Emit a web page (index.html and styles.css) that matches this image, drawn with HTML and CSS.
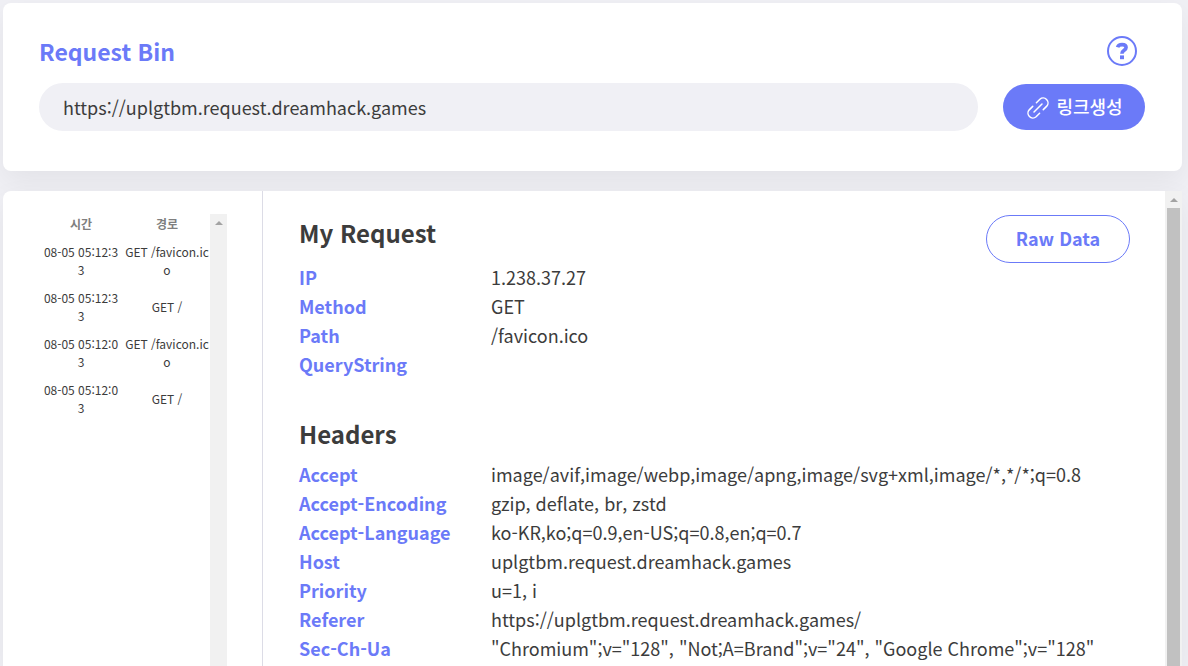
FILE: index.html
```html
<!DOCTYPE html>
<html lang="ko">
<head>
<meta charset="utf-8">
<title>Request Bin</title>
<link rel="stylesheet" href="styles.css">
</head>
<body>
<div class="page">
  <section class="card bin">
    <div class="bin-head">
      <h1 class="bin-title"><label for="bin-url">Request Bin</label></h1>
      <button class="help" type="button" aria-label="Help">
        <svg class="help-icon" viewBox="0 0 30 30" aria-hidden="true">
          <circle cx="15" cy="15" r="14" fill="none" stroke="currentColor" stroke-width="2"/>
          <path d="M10.600 11.200C11.200 9.200 13 8.600 15.100 8.600c2.600 0 4 1.100 4 2.900 0 2.900-4.200 2.700-4.200 6.200" fill="none" stroke="currentColor" stroke-width="3.600"/>
          <path d="M13 19.400h4v3.800h-4z" fill="currentColor"/>
        </svg>
      </button>
    </div>
    <div class="bin-row">
      <input class="url" id="bin-url" type="text" value="https://uplgtbm.request.dreamhack.games" readonly>
      <button class="create" type="button">
        <svg class="link-icon" viewBox="0 0 22 22" fill="none" stroke="currentColor" stroke-width="1.500" stroke-linecap="round" aria-hidden="true">
          <path d="M7 15l8-8"/>
          <path d="M9.400 5.800l3.500-3.500a4.850 4.850 0 0 1 6.850 6.850l-3.500 3.500"/>
          <path d="M12.600 16.200l-3.500 3.500a4.850 4.850 0 0 1-6.850-6.850l3.500-3.500"/>
        </svg>
        <span>링크생성</span>
      </button>
    </div>
  </section>

  <main class="card viewer">
    <aside class="history">
      <div class="history-scroll">
        <div class="log-wrap">
          <table class="log">
            <thead><tr><th>시간</th><th>경로</th></tr></thead>
            <tbody>
              <tr><td class="time">08-05 05:12:33</td><td>GET /favicon.ico</td></tr>
              <tr><td class="time">08-05 05:12:33</td><td>GET /</td></tr>
              <tr><td class="time">08-05 05:12:03</td><td>GET /favicon.ico</td></tr>
              <tr><td class="time">08-05 05:12:03</td><td>GET /</td></tr>
            </tbody>
          </table>
        </div>
        <div class="track" aria-hidden="true"><span class="arrow"></span></div>
      </div>
    </aside>
    <div class="detail">
      <div class="detail-head">
        <h2 class="heading">My Request</h2>
        <button class="raw" type="button">Raw Data</button>
      </div>
      <dl class="fields">
        <dt>IP</dt><dd>1.238.37.27</dd>
        <dt>Method</dt><dd>GET</dd>
        <dt>Path</dt><dd>/favicon.ico</dd>
        <dt>QueryString</dt><dd></dd>
      </dl>
      <h2 class="heading">Headers</h2>
      <dl class="fields">
        <dt>Accept</dt><dd>image/avif,image/webp,image/apng,image/svg+xml,image/*,*/*;q=0.8</dd>
        <dt>Accept-Encoding</dt><dd>gzip, deflate, br, zstd</dd>
        <dt>Accept-Language</dt><dd>ko-KR,ko;q=0.9,en-US;q=0.8,en;q=0.7</dd>
        <dt>Host</dt><dd>uplgtbm.request.dreamhack.games</dd>
        <dt>Priority</dt><dd>u=1, i</dd>
        <dt>Referer</dt><dd>https://uplgtbm.request.dreamhack.games/</dd>
        <dt>Sec-Ch-Ua</dt><dd>"Chromium";v="128", "Not;A=Brand";v="24", "Google Chrome";v="128"</dd>
      </dl>
    </div>
    <div class="track" aria-hidden="true"><span class="arrow"></span><span class="thumb"></span></div>
  </main>
</div>
</body>
</html>
```

FILE: styles.css
```css
* { box-sizing: border-box; }

body {
  margin: 0;
  background: #f0f0f5;
  color: #3c3c3c;
  font-family: "Noto Sans CJK KR", "Noto Sans", sans-serif;
}

h1, h2, dl, dd { margin: 0; }
button, input { font: inherit; border: 0; margin: 0; }
button { cursor: pointer; }

.page {
  display: flex;
  flex-direction: column;
  gap: 20px;
  height: 100vh;
  padding: 3px 6px 0 3px;
  overflow: hidden;
}

.card {
  background: #fff;
  border-radius: 8px;
  box-shadow: 0 10px 30px rgba(0, 0, 20, 0.06);
}

.bin {
  flex: none;
  padding: 30px 37px 40px 36px;
}

.bin-head {
  display: flex;
  align-items: center;
  justify-content: space-between;
  height: 36px;
  margin-bottom: 14px;
  padding-right: 8px;
}

.bin-title {
  color: #6b7af8;
  font-size: 23px;
  line-height: 36px;
  font-weight: 700;
}

.help {
  padding: 0;
  background: none;
  color: #6b7af8;
}

.help-icon { display: block; width: 30px; height: 30px; }

.bin-row {
  display: flex;
  align-items: center;
  gap: 25px;
}

.url {
  flex: 1;
  min-width: 0;
  height: 48px;
  padding: 0 24px;
  border-radius: 24px;
  background: #f0f0f5;
  color: #3c3c3c;
  font-size: 18px;
}

.create {
  display: flex;
  align-items: center;
  justify-content: center;
  gap: 7px;
  width: 142px;
  height: 46px;
  padding: 2px 0 0 2px;
  border-radius: 23px;
  background: #6b7af8;
  color: #fff;
  font-size: 18px;
  font-weight: 500;
  line-height: 26px;
}

.create span { padding-bottom: 4px; }

.link-icon { width: 22px; height: 22px; }

.viewer {
  display: flex;
  flex: 1;
  min-height: 0;
  border-top-right-radius: 0;
  border-bottom-left-radius: 0;
  border-bottom-right-radius: 0;
  overflow: hidden;
}

.history {
  flex: none;
  width: 260px;
  padding: 23px 35px 0;
  border-right: 1px solid #dcdce6;
}

.history-scroll { display: flex; height: 100%; }

.log-wrap { flex: 1; min-width: 0; }

.log {
  width: 100%;
  table-layout: fixed;
  border-collapse: collapse;
  font-size: 12px;
  line-height: 18px;
  text-align: center;
  word-break: break-all;
}

.log th { padding: 1px 1px 5px; color: #7f7f7f; font-weight: 700; }
.log td { height: 46px; padding: 5px 1px; }
.log .time { padding: 5px 4px; }

.track {
  display: flex;
  flex: none;
  flex-direction: column;
  align-items: center;
  gap: 6px;
  width: 17px;
  padding-top: 7px;
  background: #f1f1f1;
}

.arrow {
  flex: none;
  border: 4px solid transparent;
  border-top: 0;
  border-bottom-color: #a3a3a3;
}

.thumb { flex: 1; width: 13px; background: #c1c1c1; }

.detail {
  flex: 1;
  min-width: 0;
  padding: 24px 35px 0 36px;
  overflow: hidden;
}

.detail-head {
  display: flex;
  align-items: flex-start;
  justify-content: space-between;
  height: 48px;
}

.heading {
  font-size: 24px;
  line-height: 36px;
  font-weight: 700;
}

.raw {
  width: 144px;
  height: 48px;
  padding: 0 0 2px;
  border: 1px solid #6b7af8;
  border-radius: 24px;
  background: #fff;
  color: #6b7af8;
  font-size: 18px;
  font-weight: 700;
}

.fields {
  display: grid;
  grid-template-columns: 192px 1fr;
  grid-auto-rows: minmax(29px, auto);
  font-size: 18px;
  line-height: 29px;
}

.fields + .heading { margin: 37px 0 8px; }
.fields dt { color: #6b7af8; font-weight: 700; }
.fields dd { overflow-wrap: anywhere; }
```
